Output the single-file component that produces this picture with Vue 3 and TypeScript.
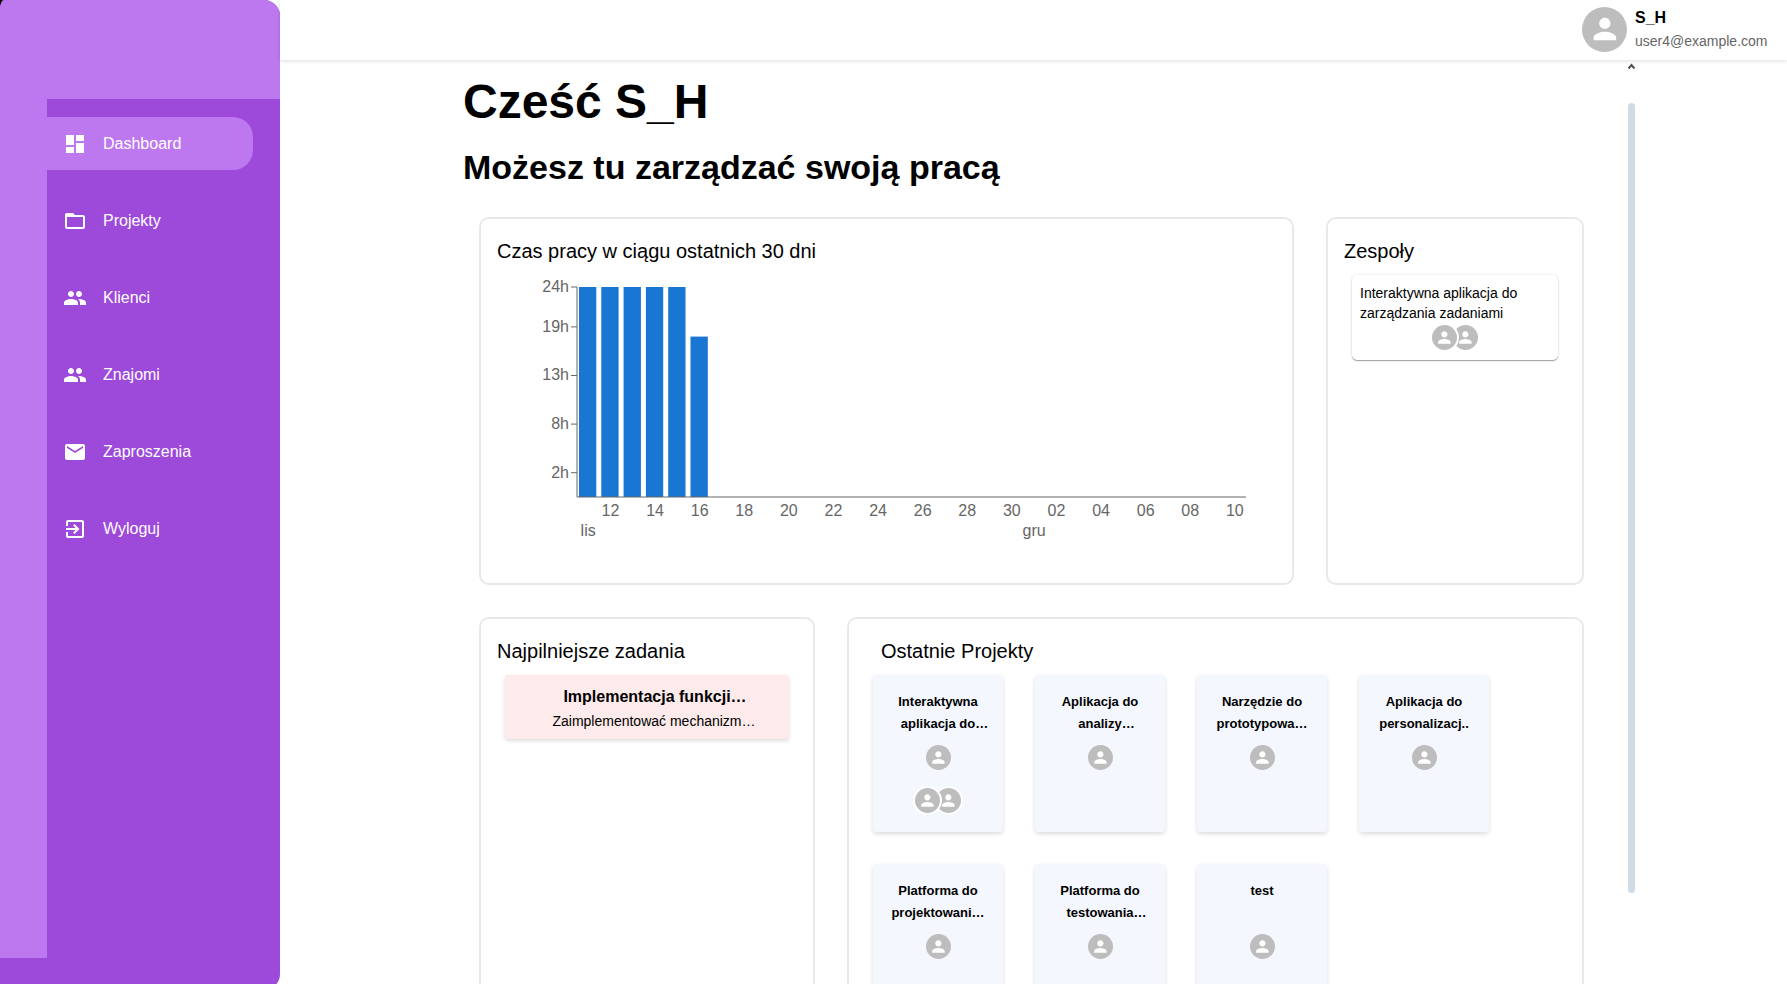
<script setup lang="ts">
interface NavItem {
  label: string
  icon: string
  active?: boolean
}

interface Project {
  first: string
  second?: string
  // Ellipsis drawn past the centred second line
  hanging?: boolean
  members: number
}

const peopleIcon =
  'M16 11c1.66 0 2.99-1.34 2.99-3S17.66 5 16 5c-1.66 0-3 1.34-3 3s1.34 3 3 3zm-8 0c1.66 0 2.99-1.34 2.99-3S9.66 5 8 5C6.34 5 5 6.34 5 8s1.34 3 3 3zm0 2c-2.33 0-7 1.17-7 3.5V19h14v-2.5c0-2.33-4.67-3.5-7-3.5zm8 0c-.29 0-.62.02-.97.05 1.16.84 1.97 1.97 1.97 3.45V19h6v-2.5c0-2.33-4.67-3.5-7-3.5z'
const personIcon =
  'M12 12c2.21 0 4-1.79 4-4s-1.79-4-4-4-4 1.79-4 4 1.79 4 4 4zm0 2c-2.67 0-8 1.34-8 4v2h16v-2c0-2.66-5.33-4-8-4z'

const navItems: NavItem[] = [
  { label: 'Dashboard', icon: 'M3 13h8V3H3v10zm0 8h8v-6H3v6zm10 0h8V11h-8v10zm0-18v6h8V3h-8z', active: true },
  {
    label: 'Projekty',
    icon: 'M20 6h-8l-2-2H4c-1.1 0-1.99.9-1.99 2L2 18c0 1.1.9 2 2 2h16c1.1 0 2-.9 2-2V8c0-1.1-.9-2-2-2zm0 12H4V8h16v10z',
  },
  { label: 'Klienci', icon: peopleIcon },
  { label: 'Znajomi', icon: peopleIcon },
  {
    label: 'Zaproszenia',
    icon: 'M20 4H4c-1.1 0-1.99.9-1.99 2L2 18c0 1.1.9 2 2 2h16c1.1 0 2-.9 2-2V6c0-1.1-.9-2-2-2zm0 4l-8 5-8-5V6l8 5 8-5v2z',
  },
  {
    label: 'Wyloguj',
    icon: 'M10.09 15.59L11.5 17l5-5-5-5-1.41 1.41L12.67 11H3v2h9.67l-2.58 2.59zM19 3H5c-1.11 0-2 .9-2 2v4h2V5h14v14H5v-4H3v4c0 1.1.89 2 2 2h14c1.1 0 2-.9 2-2V5c0-1.1-.9-2-2-2z',
  },
]

const projects: Project[] = [
  { first: 'Interaktywna', second: 'aplikacja do', hanging: true, members: 2 },
  { first: 'Aplikacja do', second: 'analizy', hanging: true, members: 0 },
  { first: 'Narzędzie do', second: 'prototypowa…', members: 0 },
  { first: 'Aplikacja do', second: 'personalizacj..', members: 0 },
  { first: 'Platforma do', second: 'projektowani…', members: 0 },
  { first: 'Platforma do', second: 'testowania', hanging: true, members: 0 },
  { first: 'test', members: 0 },
]

// Work time per day in seconds, starting on 11 November
const DAY = 86400
const worked: number[] = [DAY, DAY, DAY, DAY, DAY, 66000]
const plot = { left: 80, top: 20, width: 669, height: 210, days: 30 }
const band = plot.width / plot.days
const baseline = plot.top + plot.height

const bars = worked.map((seconds, i) => {
  const height = (seconds / DAY) * plot.height
  return { x: plot.left + i * band + 2, y: baseline - height, height }
})

const yTicks = [DAY, 70000, 50000, 30000, 10000].map((seconds) => ({
  label: `${Math.floor(seconds / 3600)}h`,
  y: baseline - (seconds / DAY) * plot.height,
}))

const center = (i: number): number => plot.left + (i + 0.5) * band

const xTicks = Array.from({ length: 15 }, (_, k) => {
  const i = k * 2 + 1
  const day = 11 + i
  return { label: String(day > 30 ? day - 30 : day).padStart(2, '0'), x: center(i) }
})

const months = [
  { label: 'lis', x: center(0) },
  { label: 'gru', x: center(20) },
]
</script>

<template>
  <div class="page">
    <aside class="side">
      <div class="side-panel">
        <div class="side-head"></div>
        <div class="side-body">
          <div class="side-strip"></div>
          <nav>
            <ul class="menu">
              <li v-for="item in navItems" :key="item.label">
                <a href="#" class="menu-link" :class="{ active: item.active }">
                  <svg class="menu-icon" viewBox="0 0 24 24" aria-hidden="true"><path :d="item.icon" /></svg>
                  <span>{{ item.label }}</span>
                </a>
              </li>
            </ul>
          </nav>
        </div>
      </div>
    </aside>

    <div class="content">
      <header class="topbar">
        <span class="avatar large"><svg viewBox="0 0 24 24" aria-hidden="true"><path :d="personIcon" /></svg></span>
        <div class="account">
          <div class="account-name">S_H</div>
          <div class="account-mail">user4@example.com</div>
        </div>
      </header>

      <div class="scroller">
        <main class="main">
          <h1>Cześć S_H</h1>
          <h2>Możesz tu zarządzać swoją pracą</h2>

          <div class="rows">
            <div class="row row-top">
              <section class="card">
                <h3>Czas pracy w ciągu ostatnich 30 dni</h3>
                <svg class="chart" viewBox="0 0 779 276" role="img" aria-label="Czas pracy">
                  <rect v-for="(bar, i) in bars" :key="i" class="bar" :x="bar.x" :y="bar.y" width="17.3" :height="bar.height" />
                  <line class="axis" :x1="plot.left" :y1="plot.top" :x2="plot.left" :y2="baseline" />
                  <line class="axis" :x1="plot.left" :y1="baseline" :x2="plot.left + plot.width" :y2="baseline" />
                  <g v-for="tick in yTicks" :key="tick.label">
                    <line class="axis" :x1="plot.left - 6" :x2="plot.left" :y1="tick.y" :y2="tick.y" />
                    <text class="end" :x="plot.left - 8" :y="tick.y + 5">{{ tick.label }}</text>
                  </g>
                  <text v-for="tick in xTicks" :key="tick.label" class="middle" :x="tick.x" :y="baseline + 19">{{ tick.label }}</text>
                  <text v-for="month in months" :key="month.label" class="middle" :x="month.x" :y="baseline + 39">{{ month.label }}</text>
                </svg>
              </section>

              <section class="card">
                <h3>Zespoły</h3>
                <article class="team">
                  <p>Interaktywna aplikacja do zarządzania zadaniami</p>
                  <div class="group">
                    <span v-for="n in 2" :key="n" class="avatar"><svg viewBox="0 0 24 24" aria-hidden="true"><path :d="personIcon" /></svg></span>
                  </div>
                </article>
              </section>
            </div>

            <div class="row row-bottom">
              <section class="card">
                <h3>Najpilniejsze zadania</h3>
                <article class="task">
                  <h4>Implementacja funkcji<span class="hang">…</span></h4>
                  <p>Zaimplementować mechanizm<span class="hang">…</span></p>
                </article>
              </section>

              <section class="card">
                <h3 class="indented">Ostatnie Projekty</h3>
                <div class="projects">
                  <article v-for="(project, i) in projects" :key="i" class="project">
                    <h4>
                      {{ project.first }}
                      <template v-if="project.second">
                        <br />{{ project.second }}<span v-if="project.hanging" class="hang">…</span>
                      </template>
                    </h4>
                    <span class="avatar"><svg viewBox="0 0 24 24" aria-hidden="true"><path :d="personIcon" /></svg></span>
                    <div v-if="project.members" class="group">
                      <span v-for="n in project.members" :key="n" class="avatar"><svg viewBox="0 0 24 24" aria-hidden="true"><path :d="personIcon" /></svg></span>
                    </div>
                  </article>
                </div>
              </section>
            </div>
          </div>
        </main>
        <div class="scrollbar" aria-hidden="true">
          <svg class="scroll-up" viewBox="0 0 7 7"><path d="M0.5 5.5 L3.5 2 L6.5 5.5" /></svg>
          <div class="thumb"></div>
          <div class="track-rest"></div>
        </div>
      </div>
    </div>
  </div>
</template>

<style>
body {
  margin: 0;
  background: #fff;
}
</style>

<style scoped>
.page {
  display: flex;
  height: 100vh;
  overflow: hidden;
  font-family: 'Liberation Sans', Arial, sans-serif;
  font-size: 16px;
  color: #000;
}
h1,
h2,
h3,
h4,
p,
ul {
  margin: 0;
  padding: 0;
}
.side {
  flex: 0 0 280px;
  background: linear-gradient(90deg, #000 50%, #fff 50%);
}
.side-panel {
  display: flex;
  flex-direction: column;
  box-sizing: border-box;
  height: calc(100vh + 6px);
  padding-bottom: 32px;
  overflow: hidden;
  background: #9d49da;
  border-radius: 4px 16px 16px 0 / 9px 16px 16px 0;
}
.side-head {
  flex: 0 0 99px;
  background: #bd78ef;
}
.side-body {
  flex: 1;
  display: flex;
}
.side-strip {
  flex: 0 0 47px;
  background: #bd78ef;
}
nav {
  flex: 1;
  padding: 18px 27px 0 0;
}
.menu {
  display: flex;
  flex-direction: column;
  gap: 24px;
  list-style: none;
}
.menu-link {
  display: flex;
  align-items: center;
  gap: 16px;
  height: 53px;
  padding-left: 16px;
  border-radius: 0 20px 20px 0;
  color: #fff;
  text-decoration: none;
}
.menu-link.active {
  background: #bd78ef;
}
.menu-icon {
  width: 24px;
  height: 24px;
  fill: #fff;
}
.content {
  flex: 1;
  min-width: 0;
  display: flex;
  flex-direction: column;
}
.topbar {
  flex: 0 0 60px;
  display: flex;
  justify-content: flex-end;
  align-items: center;
  gap: 8px;
  box-sizing: border-box;
  padding: 0 16px 2px 0;
  box-shadow: 0 1px 4px rgba(0, 0, 0, 0.14);
}
.account {
  min-width: 136px;
}
.account-name {
  font-weight: 700;
  line-height: 24px;
}
.account-mail {
  font-size: 14px;
  line-height: 22px;
  color: #666;
}
.avatar {
  display: inline-flex;
  align-items: center;
  justify-content: center;
  width: 25px;
  height: 25px;
  border-radius: 50%;
  background: #bdbdbd;
}
.avatar.large {
  width: 45px;
  height: 45px;
}
.avatar svg {
  width: 75%;
  height: 75%;
  fill: #fff;
}
.group {
  display: flex;
  flex-direction: row-reverse;
  justify-content: center;
}
.group .avatar {
  border: 2px solid #fff;
}
.group .avatar:not(:first-child) {
  position: relative;
  margin-right: -8px;
}
.scroller {
  flex: 1;
  min-height: 0;
  display: flex;
  box-sizing: border-box;
  width: 100%;
  max-width: 1203px;
  margin: 0 auto;
  overflow: hidden;
}
.main {
  flex: 1;
  min-width: 0;
  padding: 14px 44px 32px 31px;
}
h1 {
  margin-bottom: 16px;
  font-size: 48px;
  line-height: 56px;
}
h2 {
  font-size: 34px;
  line-height: 42px;
}
h3 {
  font-size: 20px;
  font-weight: 400;
  line-height: 32px;
}
.rows {
  display: flex;
  flex-direction: column;
  gap: 32px;
  margin: 29px 0 0 16px;
}
.row {
  display: grid;
  gap: 32px;
}
.row-top {
  grid-template-columns: 815fr 258fr;
}
.row-bottom {
  grid-template-columns: 336fr 737fr;
}
.card {
  box-sizing: border-box;
  min-width: 0;
  min-height: 368px;
  padding: 16px;
  border: 2px solid #e8e8e8;
  border-radius: 10px;
}
.chart {
  display: block;
  width: 100%;
}
.chart text {
  font-size: 16px;
  fill: #666;
}
.end {
  text-anchor: end;
}
.middle {
  text-anchor: middle;
}
.axis {
  stroke: #666;
  stroke-width: 1;
}
.bar {
  fill: #1976d2;
}
.team {
  margin: 8px;
  padding: 8px;
  border-radius: 5px;
  box-shadow: 0 1px 1px rgba(0, 0, 0, 0.35), 0 0 3px rgba(0, 0, 0, 0.12);
  background: #fff;
}
.team p {
  font-size: 14px;
  line-height: 20px;
}
.task {
  margin: 8px;
  padding: 8px 16px;
  border-radius: 4px;
  background: #fdeaea;
  box-shadow: 0 2px 4px rgba(0, 0, 0, 0.14);
  text-align: center;
}
.task h4 {
  line-height: 28px;
}
.task p {
  font-size: 14px;
  line-height: 20px;
}
.hang {
  display: inline-block;
  width: 0;
}
.indented {
  margin-left: 16px;
}
.projects {
  display: flex;
  flex-wrap: wrap;
  gap: 32px;
  margin: 8px;
}
.project {
  display: flex;
  flex-direction: column;
  align-items: center;
  box-sizing: border-box;
  width: 130px;
  height: 157px;
  padding: 16px;
  border-radius: 4px;
  background: #f4f7fe;
  box-shadow: 0 2px 4px rgba(0, 0, 0, 0.14);
  text-align: center;
}
.project h4 {
  width: 100%;
  height: 44px;
  margin-bottom: 10px;
  font-size: 13px;
  line-height: 22px;
}
.project .group {
  margin-top: 16px;
}
.scrollbar {
  flex: 0 0 7px;
  display: flex;
  flex-direction: column;
  padding-top: 3px;
}
.scroll-up {
  width: 7px;
  height: 7px;
  margin-bottom: 33px;
  fill: none;
  stroke: #505050;
  stroke-width: 2;
}
.thumb {
  flex: 790;
  border-radius: 4px;
  background: #d0dce5;
}
.track-rest {
  flex: 91;
}
</style>
